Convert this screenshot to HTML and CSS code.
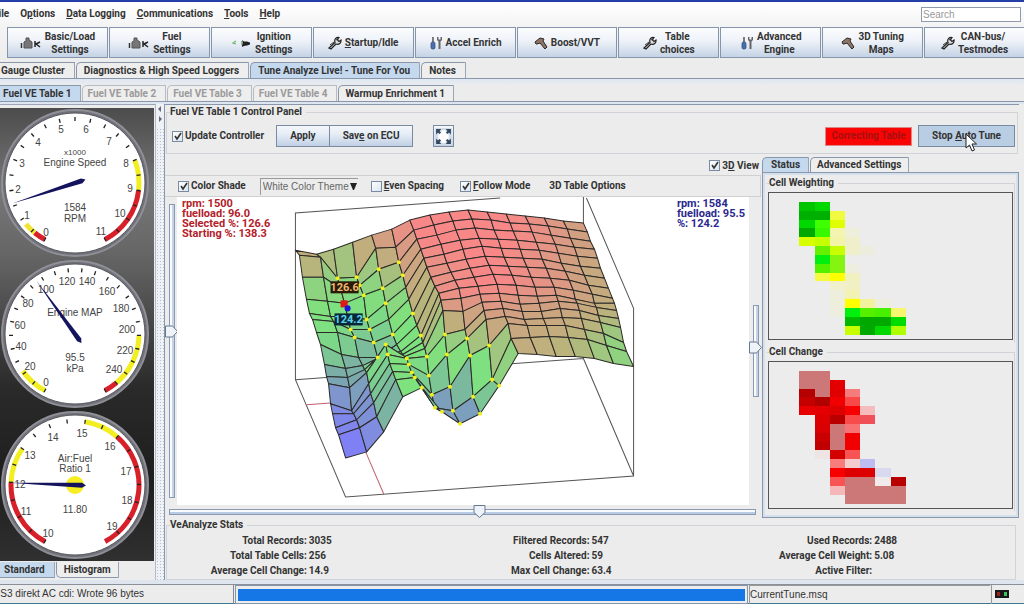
FILE: index.html
```html
<!DOCTYPE html>
<html lang="en">
<head>
<meta charset="utf-8">
<title>Tuning Console</title>
<link rel="stylesheet" href="styles.css">
</head>
<body>
<svg class="sprites" aria-hidden="true">
  <symbol id="i-injector" viewBox="0 0 22 14">
    <path d="M1.500 7v5" stroke="#333" stroke-width="1.500" fill="none"/>
    <path d="M4 12V6l2-1V2h3v2l3 2v6z" fill="#777" stroke="#555" stroke-width="1"/>
    <path d="M15 5v6M20 6l-4 2 4 3" stroke="#222" stroke-width="1.500" fill="none"/>
  </symbol>
  <symbol id="i-plug" viewBox="0 0 22 14">
    <path d="M6 5L3 7l3 1" stroke="#6b6" stroke-width="1.2" fill="none"/>
    <path d="M12 4l2 1.500h3l3 1v2l-3 1-3 .5-2 1V9l1-2z" fill="#222"/>
    <path d="M12 5v4" stroke="#4a7a4a"/>
  </symbol>
  <symbol id="i-wrench" viewBox="0 0 14 14">
    <path d="M1 12L7 6.500C6 3.500 8 1 11 1.500L9.500 4l1.500 1.500L13 4c.5 3-2 5-5 4L3 13z" fill="#ddd" stroke="#222" stroke-width="1.200"/>
    <path d="M2 9l4-3M8 4l3-2" stroke="#333"/>
  </symbol>
  <symbol id="i-tools" viewBox="0 0 12 14">
    <path d="M3 1v5" stroke="#555" stroke-width="1.500"/>
    <rect x="1" y="6" width="4" height="7" rx="1.500" fill="#4a6fae" stroke="#2c4674" stroke-width=".7"/>
    <path d="M7 1v3l1.500 1.500V13h2V5.500L12 4V1l-1.500 0v2.500h-2V1z" fill="#666"/>
  </symbol>
  <symbol id="i-hammer" viewBox="0 0 14 14">
    <path d="M1 6l5-4 4 1-1 2 4 6-2 2-5-6-3 1-1 0z" fill="#8d7668" stroke="#2b2623" stroke-width="1"/>
  </symbol>
</svg>

<header>
  <nav class="menubar" aria-label="Main menu">
    <a href="#file"><u>F</u>ile</a>
    <a href="#options">O<u>p</u>tions</a>
    <a href="#logging"><u>D</u>ata Logging</a>
    <a href="#comm"><u>C</u>ommunications</a>
    <a href="#tools"><u>T</u>ools</a>
    <a href="#help"><u>H</u>elp</a>
    <input class="search" type="text" placeholder="Search" aria-label="Search">
  </nav>
  <div class="toolbar">
    <button><svg class="wide"><use href="#i-injector"/></svg><span>Basic/Load<br>Settings</span></button>
    <button><svg class="wide"><use href="#i-injector"/></svg><span>Fuel<br>Settings</span></button>
    <button><svg class="wide"><use href="#i-plug"/></svg><span>Ignition<br>Settings</span></button>
    <button><svg><use href="#i-wrench"/></svg><span><u>S</u>tartup/Idle</span></button>
    <button><svg><use href="#i-tools"/></svg><span>Accel Enrich</span></button>
    <button><svg><use href="#i-hammer"/></svg><span>Boost/VVT</span></button>
    <button><svg><use href="#i-wrench"/></svg><span>Table<br>choices</span></button>
    <button><svg><use href="#i-tools"/></svg><span>Advanced<br>Engine</span></button>
    <button><svg><use href="#i-hammer"/></svg><span>3D Tuning<br>Maps</span></button>
    <button><svg><use href="#i-wrench"/></svg><span>CAN-bus/<br>Testmodes</span></button>
  </div>
</header>

<div class="tabs main-tabs" role="tablist">
  <button class="tab first" role="tab">Gauge Cluster</button>
  <button class="tab" role="tab">Diagnostics &amp; High Speed Loggers</button>
  <button class="tab on" role="tab" aria-selected="true">Tune Analyze Live! - Tune For You</button>
  <button class="tab" role="tab">Notes</button>
</div>
<div class="tabs table-tabs" role="tablist">
  <button class="tab on first" role="tab" aria-selected="true">Fuel VE Table 1</button>
  <button class="tab" role="tab" disabled>Fuel VE Table 2</button>
  <button class="tab" role="tab" disabled>Fuel VE Table 3</button>
  <button class="tab" role="tab" disabled>Fuel VE Table 4</button>
  <button class="tab" role="tab">Warmup Enrichment 1</button>
</div>

<main>
  <aside class="side">
    <div class="gauges" id="gauges"></div>
    <div class="tabs bottom-tabs" role="tablist">
      <button class="tab on first" role="tab" aria-selected="true">Standard</button>
      <button class="tab" role="tab">Histogram</button>
    </div>
  </aside>
  <div class="divider">
    <svg viewBox="0 0 8 24" aria-hidden="true"><path d="M5 2v6L2 5zM3 12v6l3-3z" fill="#667"/></svg>
  </div>

  <section class="work">
    <fieldset class="control">
      <legend>Fuel VE Table 1 Control Panel</legend>
      <div class="control-row">
        <label class="check"><input type="checkbox" checked>Update Controller</label>
        <div class="pair"><button class="btn">Apply</button><button class="btn">Sav<u>e</u> on ECU</button></div>
        <button class="btn expand" aria-label="Full screen">
          <svg viewBox="0 0 18 18"><rect x="1" y="1" width="16" height="16" fill="#d3dce8"/><path d="M4 7h10v4H4zM7 3h4v12H7zM5 5h8v8H5z" fill="#fff"/><path d="M2 2h5L2 7zM16 2h-5l5 5zM2 16h5l-5-5zM16 16h-5l5-5z" fill="#33475f"/><path d="M4 4l2 2M14 4l-2 2M4 14l2-2M14 14l-2-2" stroke="#33475f" stroke-width="2"/></svg>
        </button>
        <span class="flag">Correcting Table</span>
        <button class="btn stop">Stop <u>A</u>uto Tune
          <svg class="pointer" viewBox="0 0 12 19"><path d="M1 1v14l3.500-3 2.500 6 2.500-1-2.500-6h4.500z" fill="#fff" stroke="#222"/></svg>
        </button>
      </div>
    </fieldset>

    <div class="columns">
      <div class="view">
        <div class="view-top"><label class="check"><input type="checkbox" checked><span>3<u>D</u> View</span></label></div>
        <div class="view-bar">
          <label class="check"><input type="checkbox" checked>Color Shade</label>
          <select aria-label="Colour theme"><option>White Color Theme</option></select>
          <label class="check"><input type="checkbox"><span><u>E</u>ven Spacing</span></label>
          <label class="check"><input type="checkbox" checked><span><u>F</u>ollow Mode</span></label>
          <a class="options" href="#table-options">3D Table Options</a>
        </div>
        <div class="plot-grid">
          <input class="vslider left" type="range" min="0" max="100" value="43" aria-label="Pitch">
          <div class="plot">
            <svg id="surface" viewBox="178 196 570 307" role="img" aria-label="3D fuel table"></svg>
            <p class="readout selected">rpm: 1500<br>fuelload: 96.0<br>Selected %: 126.6<br>Starting %: 138.3</p>
            <p class="readout live">rpm: 1584<br>fuelload: 95.5<br>%: 124.2</p>
          </div>
          <input class="vslider right" type="range" min="0" max="100" value="46" aria-label="Zoom">
          <input class="hslider" type="range" min="0" max="100" value="53" aria-label="Rotation">
        </div>
      </div>

      <div class="status">
        <div class="tabs status-tabs" role="tablist">
          <button class="tab on" role="tab" aria-selected="true">Status</button>
          <button class="tab" role="tab">Advanced Settings</button>
        </div>
        <div class="status-body">
          <fieldset><legend>Cell Weighting</legend><svg class="heat" id="weight" viewBox="0 0 16 16.500" preserveAspectRatio="none" role="img" aria-label="Cell weighting"></svg></fieldset>
          <fieldset><legend>Cell Change</legend><svg class="heat" id="change" viewBox="0 0 16 16.500" preserveAspectRatio="none" role="img" aria-label="Cell change"></svg></fieldset>
        </div>
      </div>
    </div>

    <fieldset class="stats">
      <legend>VeAnalyze Stats</legend>
      <dl>
        <div><dt>Total Records:</dt><dd>3035</dd></div>
        <div><dt>Filtered Records:</dt><dd>547</dd></div>
        <div><dt>Used Records:</dt><dd>2488</dd></div>
        <div><dt>Total Table Cells:</dt><dd>256</dd></div>
        <div><dt>Cells Altered:</dt><dd>59</dd></div>
        <div><dt>Average Cell Weight:</dt><dd>5.08</dd></div>
        <div><dt>Average Cell Change:</dt><dd>14.9</dd></div>
        <div><dt>Max Cell Change:</dt><dd>63.4</dd></div>
        <div><dt>Active Filter:</dt><dd></dd></div>
      </dl>
    </fieldset>
  </section>
</main>

<footer>
  <span class="message"><span>MS3 direkt AC cdi: Wrote 96 bytes</span></span>
  <span class="progress"><span></span></span>
  <span class="file">CurrentTune.msq</span>
  <span class="leds"><svg viewBox="0 0 14 8"><rect width="14" height="8" fill="#181818"/><rect x="2" y="2" width="3" height="4" fill="#a02020"/><rect x="9" y="2" width="3" height="4" fill="#40c060"/></svg></span>
</footer>
<script src="app.js"></script>
</body>
</html>
```
FILE: styles.css
```css
* { box-sizing: border-box; }
body {
  margin: 0;
  min-height: 100vh;
  display: flex;
  flex-direction: column;
  overflow-x: hidden;
  background: #ececec;
  color: #333;
  font: bold 10px/12px Roboto, "Liberation Sans", sans-serif;
}
button, input, select { font: inherit; color: inherit; margin: 0; }
a { color: inherit; text-decoration: none; }
.sprites { position: absolute; width: 0; height: 0; }

header { border-top: 2px solid #2440a8; background: linear-gradient(#fff, #f4f4f4 24px, #ececec 60px); }
.menubar { display: flex; align-items: center; gap: 11px; height: 24px; margin-left: -7px; padding-right: 3px; }
.search {
  width: 100px; height: 15px; margin-left: auto; padding: 0 1px;
  border: 1px solid #8e9aab; background: #fff;
  font: 10px/12px "Liberation Sans", sans-serif;
}
.search::placeholder { color: #999; opacity: 1; }
.toolbar { display: grid; grid-template-columns: repeat(10, 1fr); gap: 1px; margin-right: -1px; padding: 1px 0 4px 7px; }
.toolbar button {
  display: flex; align-items: center; justify-content: center; gap: 3px;
  height: 31px; padding: 0;
  border: 1px solid #8595ab;
  background: linear-gradient(#fbfcfe, #eef2f8 45%, #c4d3e6);
  line-height: 13px; text-align: center;
}
.toolbar svg { width: 14px; height: 14px; }
.toolbar svg.wide { width: 22px; }

.tabs { display: flex; align-items: flex-end; gap: 1px; }
.tab {
  height: 16px; padding: 0 6px;
  border: 1px solid #8a97aa; border-bottom: 0; border-right-color: #9aa5b5;
  border-top-left-radius: 5px;
  background: #eeeeee;
  white-space: nowrap;
}
.tab.on { background: #c4d8ee; }
.tab.first { border-left: 0; border-top-left-radius: 0; padding-left: 1px; }
.tab:disabled { color: #9a9a9a; border-color: #b5bcc6; }
.main-tabs { border-bottom: 1px solid #8a97aa; }
.main-tabs .first { padding-right: 9px; }
.main-tabs .tab + .tab { padding: 0 9px 0 7px; }
.table-tabs { padding-top: 6px; border-bottom: 1px solid #8a97aa; background: linear-gradient(#dfe8f3, #ececec 7px); }
.table-tabs .first { padding: 0 8px 0 3px; }
.table-tabs .tab:disabled { padding: 0 9px 0 5px; }
.table-tabs .tab:last-child { padding: 0 8px 0 6px; }

main {
  flex: 1; display: grid; grid-template-columns: 156px 8px 1fr;
  padding-right: 5px; border-top: 2px solid #dde5f0; border-bottom: 4px solid #dfe5ee;
}
.side { display: flex; flex-direction: column; padding-top: 3px; border-top: 1px solid #9aa5b8; border-right: 1px solid #b0bac8; }
.gauges {
  flex: 1; display: flex; flex-direction: column; justify-content: space-between;
  margin-right: 1px;
  background: linear-gradient(#4c4c4c, #777 18%, #666 32%, #2a2a2a 62%, #1e1e1e 82%, #303030);
}
.gauges svg { display: block; width: 100%; }
.gauges text { font: 10px "Liberation Sans", sans-serif; fill: #444; text-anchor: middle; }
.gauges .small { font-size: 8px; }
.bottom-tabs { align-items: flex-start; padding: 1px 0 2px; }
.bottom-tabs .tab { border-top: 0; border-bottom: 1px solid #8a97aa; border-radius: 0 0 0 5px; padding: 0 7px; }
.bottom-tabs .first { border-radius: 0; padding: 0 9px 0 4px; }
.divider { background: radial-gradient(circle, #b8c0cc 0 25%, transparent 30%) 0 0 / 3px 3px, #eef1f5; }
.divider svg { display: block; width: 8px; height: 24px; background: #eef1f5; }

.work { display: flex; flex-direction: column; min-width: 0; border: 1px solid #8a97aa; border-right: 0; border-bottom: 0; }
fieldset { min-width: 0; margin: 0; padding: 0; border: 1px solid #d0d3d8; }
legend { padding: 0 4px 0 0; margin-left: 3px; }
.control { margin: 1px 1px 0; padding: 7px 2px 6px 5px; }
.control legend { margin-left: -2px; }
.control-row { display: flex; align-items: center; }
.check { display: flex; align-items: center; gap: 2px; white-space: nowrap; }
.check input {
  appearance: none; width: 11px; height: 11px;
  border: 1px solid #7a8aa0; background: linear-gradient(135deg, #fff, #dbe5f1);
}
.check input:checked {
  background: url("data:image/svg+xml,%3Csvg xmlns='http://www.w3.org/2000/svg' viewBox='0 0 9 9'%3E%3Cpath d='M2 4l2 3 4-6' fill='none' stroke='%23333' stroke-width='1.600'/%3E%3C/svg%3E"), linear-gradient(135deg, #fff, #dbe5f1);
}
.pair { display: flex; margin-left: 12px; }
.btn {
  height: 22px; padding: 0 13px;
  border: 1px solid #7a8aa0;
  background: linear-gradient(#f4f7fb, #e6edf6 40%, #c0d0e4);
  white-space: nowrap;
}
.pair .btn + .btn { margin-left: -1px; }
.expand { width: 21px; padding: 0; margin-left: 20px; }
.expand svg { display: block; width: 19px; height: 19px; }
.flag {
  display: grid; place-items: center; width: 87px; height: 19px; margin-left: auto;
  border: 1px solid #d88; background: #fb0404; color: #a81010;
}
.stop { position: relative; width: 97px; padding: 0; margin-left: 6px; background: #b9cde3; }
.pointer { position: absolute; left: 46px; top: 7px; width: 12px; height: 19px; }

.columns { flex: 1; display: grid; grid-template-columns: 1fr 257px; }
.view { display: flex; flex-direction: column; min-width: 0; }
.view-top { display: flex; align-items: center; justify-content: flex-end; height: 21px; padding: 2px 3px 0 0; }
.view-bar {
  display: flex; align-items: center; height: 22px; padding-left: 13px; margin-right: 1px;
  border: 1px solid #d0d0d0; border-left: 0;
}
.view-bar select {
  appearance: none; width: 98px; height: 17px; margin: 0 13px 0 14px; padding: 0 0 0 2px;
  border: 0; border-top: 1px solid #999; border-left: 1px solid #999;
  background: url("data:image/svg+xml,%3Csvg xmlns='http://www.w3.org/2000/svg' viewBox='0 0 7 7'%3E%3Cpath d='M0 0h7L4 7H3z' fill='%23222'/%3E%3C/svg%3E") right 1px center / 7px 7px no-repeat;
  font: 10px/12px "Liberation Sans", sans-serif; color: #666;
}
.view-bar .check + .check { margin-left: 16px; }
.options { margin-left: 19px; }
.plot-grid { flex: 1; display: grid; grid-template-columns: 12px 1fr 13px; grid-template-rows: 1fr 13px; align-items: center; }
.plot { position: relative; align-self: stretch; background: #fff; }
.plot svg { display: block; width: 100%; height: 100%; }
.plot text { font: bold 11px Roboto, sans-serif; text-anchor: middle; }
.readout { position: absolute; top: 2px; margin: 0; font-size: 11px; line-height: 10px; }
.selected { left: 5px; color: #b3202a; }
.live { right: 4px; color: #2a2890; }

input[type="range"] { appearance: none; background: none; }
.hslider { grid-column: 1 / -1; width: auto; height: 13px; margin: 0 6px 0 4px; }
.vslider { writing-mode: vertical-lr; width: 13px; height: 294px; }
.vslider.right { height: 92px; }
input[type="range"]::-webkit-slider-runnable-track { border: 1px solid #8a9ab2; background: #eef2f8; }
.hslider::-webkit-slider-runnable-track { height: 6px; background: linear-gradient(#f8fafc 50%, #b9cbe2 50%) !important; }
.vslider::-webkit-slider-runnable-track { width: 6px; background: linear-gradient(90deg, #f8fafc 50%, #c4d3e6 50%) !important; }
input[type="range"]::-webkit-slider-thumb { appearance: none; width: 13px; height: 13px; border: 0; }
.hslider::-webkit-slider-thumb {
  margin-top: -5px;
  background: url("data:image/svg+xml,%3Csvg xmlns='http://www.w3.org/2000/svg' viewBox='0 0 13 13'%3E%3Cpath d='M1 .5h11v7l-5.500 5-5.500-5z' fill='%23eef3fa' stroke='%23667890'/%3E%3C/svg%3E");
}
.vslider::-webkit-slider-thumb {
  margin-left: -5px;
  background: url("data:image/svg+xml,%3Csvg xmlns='http://www.w3.org/2000/svg' viewBox='0 0 13 13'%3E%3Cpath d='M.5 1v11h7l5-5.500-5-5.500z' fill='%23eef3fa' stroke='%23667890'/%3E%3C/svg%3E");
}

.status { display: flex; flex-direction: column; padding-top: 3px; }
.status-tabs .tab { height: 15px; padding: 0 7px 0 6px; }
.status-tabs .on { padding: 0 8px; }
.status-body {
  flex: 1; display: flex; flex-direction: column; gap: 3px;
  padding: 4px 3px 5px; border: 1px solid #8a97aa;
  background: #ececec; box-shadow: inset 0 0 0 2px #d5e0ee;
}
.status-body fieldset { flex: 1; display: flex; padding: 3px 1px 2px; border-left-color: transparent; border-bottom-color: transparent; }
.status-body legend { margin-left: 1px; }
.heat { display: block; width: 100%; height: 148px; border: 1px solid #555; }

.stats { margin: 1px 3px 0 1px; padding: 2px 0 1px; }
dl { display: grid; grid-template-columns: repeat(3, 1fr); row-gap: 0; margin: 0; }
dl div { display: grid; grid-template-columns: 1fr 1fr; gap: 3px; line-height: 15px; }
dt { text-align: right; }
dd { margin: 0 0 0 -1px; }

footer {
  display: grid; grid-template-columns: 234px 513px 1fr 33px;
  height: 20px; border-top: 1px solid #8a8f98; border-bottom: 1px solid #3a7a8c; gap: 1px;
  font: 10px/18px "Liberation Sans", sans-serif;
}
.message { overflow: hidden; border-right: 1px solid #888; }
.message span { margin-left: -8px; white-space: nowrap; }
.progress { padding: 3px 2px 2px; border: 1px solid #8595ab; }
.progress span { display: block; height: 100%; background: #1577e6; }
.file { border: 1px solid #999; border-width: 1px 0 0 1px; }
.leds { padding: 5px 0 0 3px; border-left: 1px solid #999; }
.leds svg { display: block; width: 14px; height: 8px; }
```
FILE: app.js
```js
const NS = 'http://www.w3.org/2000/svg';

function add(parent, name, attrs, text) {
  const el = document.createElementNS(NS, name);
  for (const key in attrs) el.setAttribute(key, attrs[key]);
  if (text !== undefined) el.textContent = text;
  parent.appendChild(el);
  return el;
}

/* Gauges: angles run clockwise from straight up, in degrees. */
const START = -152, SWEEP = 304;

const gauges = [
  { min: 0, span: 11, tick: 0.5, needle: -108,
    zones: [[0, 0.4, '#d8202a'], [0.4, 0.8, '#f0e430'], [8, 9, '#f2ee20'], [9, 11, '#d8202a']],
    labels: [[0, -29, 49], [1, -48, 32], [2, -57, 6], [3, -53, -20], [4, -37, -41], [5, -14, -54], [6, 11, -54], [7, 34, -42], [8, 51, -20], [9, 55, 5], [10, 45, 30], [11, 26, 48]],
    lines: [['x1000', -32, 'small'], ['Engine Speed', -21], ['1584', 24], ['RPM', 35]] },
  { min: 0, span: 250, tick: 10, needle: -36,
    zones: [[0, 22, '#f2ee20'], [200, 240, '#f2ee20'], [240, 250, '#d8202a']],
    labels: [[0, -29, 48], [20, -45, 32], [40, -54, 12], [60, -55, -9], [80, -47, -31], [100, -29, -45], [120, -8, -53], [140, 12, -53], [160, 32, -43], [180, 46, -26], [200, 52, -5], [220, 50, 16], [240, 39, 35]],
    lines: [['Engine MAP', -22], ['95.5', 23], ['kPa', 34]] },
  { min: 10, span: 9.44, tick: 0.5, needle: -88, dot: true,
    zones: [[10, 12, '#d8202a'], [12, 13, '#f2ee20'], [15, 16, '#f2ee20'], [16, 19.44, '#d8202a']],
    labels: [[10, -27, 48], [11, -49, 26], [12, -55, -1], [13, -45, -30], [14, -22, -48], [15, 7, -52], [16, 35, -39], [17, 51, -14], [18, 52, 15], [19, 37, 41]],
    lines: [['Air:Fuel', -27], ['Ratio 1', -17], ['11.80', 24]] }
];

const polar = (deg, r) => {
  const a = deg * Math.PI / 180;
  return [Math.sin(a) * r, -Math.cos(a) * r];
};

gauges.forEach(g => {
  const svg = add(document.getElementById('gauges'), 'svg', { viewBox: '-75 -75 154 151' });
  add(svg, 'circle', { r: 73, fill: '#707078', stroke: '#8f8f98', 'stroke-width': 2 });
  add(svg, 'circle', { r: 70, fill: '#fff', stroke: '#55555c' });
  const angle = v => START + SWEEP * (v - g.min) / g.span;
  g.zones.forEach(([a, b, color]) => {
    const p = polar(angle(a), 64), q = polar(angle(b), 64);
    add(svg, 'path', { d: `M${p}A64 64 0 0 1 ${q}`, fill: 'none', stroke: color, 'stroke-width': 5 });
  });
  for (let v = g.min; v <= g.min + g.span + 0.001; v += g.tick) {
    const p = polar(angle(v), 62), q = polar(angle(v), 66);
    add(svg, 'path', { d: `M${p}L${q}`, stroke: '#222', 'stroke-width': 1.3 });
  }
  g.labels.forEach(([t, x, y]) => add(svg, 'text', { x, y: y + 4 }, t));
  g.lines.forEach(([t, y, cls]) => add(svg, 'text', { x: 0, y: y + 4, class: cls || '' }, t));
  if (g.dot) add(svg, 'circle', { r: 9, fill: '#f6ee20' });
  add(svg, 'path', { d: 'M0-66L2.500 7L0 11L-2.500 7Z', fill: '#14145e', transform: `rotate(${g.needle})` });
});

/* Surface mesh: screen heights for 16 columns of 16 points, back to front. */
const backX = [296, 317, 334, 353, 372, 392, 410, 430, 449, 468, 487, 506, 525, 544, 563, 583];
const shift = [0, 4, 7, 11, 14, 17, 21, 25, 29, 31, 33, 35, 37, 40, 43, 50];
const meshY = [
  [249, 254, 276, 298, 312, 318, 331, 343, 363, 375, 382, 402, 412, 426, 433, 456],
  [253, 256, 276, 300, 315, 320, 331, 353, 367, 376, 386, 409, 412, 418, 426, 450],
  [248, 277, 287, 302, 315, 328, 336, 356, 364, 368, 371, 382, 392, 401, 415, 430],
  [241, 276, 284, 294, 318, 328, 341, 356, 355, 350, 343, 353, 362, 370, 378, 395],
  [234, 247, 268, 287, 302, 318, 333, 343, 350, 353, 355, 357, 363, 371, 376, 386],
  [228, 246, 261, 274, 286, 298, 312, 324, 334, 341, 347, 355, 374, 393, 406, 410],
  [219, 229, 238, 248, 257, 266, 276, 285, 292, 299, 309, 333, 353, 385, 409, 422],
  [214, 224, 234, 243, 253, 262, 271, 279, 287, 297, 310, 328, 337, 354, 395, 412],
  [211, 220, 229, 239, 248, 258, 267, 276, 285, 293, 301, 309, 318, 344, 378, 384],
  [209, 218, 227, 237, 245, 255, 264, 273, 283, 292, 300, 307, 315, 322, 337, 352],
  [211, 219, 229, 238, 247, 256, 265, 274, 284, 294, 303, 310, 318, 324, 336, 353],
  [213, 222, 230, 239, 248, 257, 266, 276, 286, 295, 302, 310, 317, 324, 335, 355],
  [215, 223, 231, 241, 249, 258, 267, 277, 286, 294, 300, 307, 316, 324, 336, 355],
  [217, 225, 234, 243, 252, 262, 270, 279, 289, 298, 302, 309, 317, 328, 338, 357],
  [220, 228, 237, 246, 255, 265, 274, 284, 293, 302, 306, 314, 321, 332, 344, 362],
  [222, 231, 240, 248, 257, 267, 277, 287, 297, 302, 309, 317, 326, 341, 350, 365]
];
const ramp = [[45, 128, 128, 245], [62, 126, 150, 205], [76, 122, 170, 170], [86, 124, 205, 145], [98, 126, 226, 126], [114, 146, 208, 128], [126, 188, 178, 124], [138, 212, 158, 130], [150, 248, 136, 136]];

function shade(h) {
  if (h <= ramp[0][0]) return `rgb(${ramp[0].slice(1)})`;
  for (let i = 1; i < ramp.length; i++) {
    const a = ramp[i - 1], b = ramp[i];
    if (h <= b[0]) {
      const t = (h - a[0]) / (b[0] - a[0]);
      return `rgb(${[1, 2, 3].map(k => Math.round(a[k] + (b[k] - a[k]) * t))})`;
    }
  }
  return `rgb(${ramp[ramp.length - 1].slice(1)})`;
}

const surface = document.getElementById('surface');
const point = (c, r) => [backX[c] + shift[r], meshY[c][r]];
const height = (c, r) => 378 - 21 * c / 15 + 117 * shift[r] / 50 - meshY[c][r];

add(surface, 'path', {
  d: 'M500 197L296 212V378L346 495L633 474V307L586 197M583 196V357L633 474M296 378L583 357',
  fill: 'none', stroke: '#555'
});
add(surface, 'path', { d: 'M307 403L334 401M366 450L384 492', stroke: '#c06070', fill: 'none' });
for (let r = 0; r < 15; r++) {
  for (let c = 0; c < 15; c++) {
    const h = (height(c, r) + height(c + 1, r) + height(c, r + 1) + height(c + 1, r + 1)) / 4;
    add(surface, 'polygon', {
      points: [point(c, r), point(c + 1, r), point(c + 1, r + 1), point(c, r + 1)].join(' '),
      fill: shade(h), stroke: '#2c2a28', 'stroke-width': 1, 'stroke-linejoin': 'round'
    });
  }
}
const visited = { 2: [1, 5, 6], 3: [1, 2, 3, 4, 5, 6, 7, 10, 11], 4: [2, 3, 4, 6, 11, 12, 13, 14, 15], 5: [2, 3, 6, 8, 11, 12, 13, 14, 15], 6: [11, 12, 13, 14, 15], 7: [12, 13, 14, 15], 8: [13, 14, 15] };
for (const c in visited) {
  visited[c].forEach(r => {
    const [cx, cy] = point(c, r);
    add(surface, 'circle', { cx, cy, r: 2, fill: '#f0f020' });
  });
}
add(surface, 'rect', { x: 341, y: 299, width: 7, height: 7, fill: '#e01818' });
add(surface, 'circle', { cx: 348, cy: 307, r: 3, fill: '#1818d8' });
add(surface, 'rect', { x: 331, y: 280, width: 28, height: 12, fill: '#2a1a08' });
add(surface, 'text', { x: 345, y: 290, fill: '#f0b870' }, '126.6');
add(surface, 'rect', { x: 335, y: 312, width: 28, height: 12, fill: '#062838' });
add(surface, 'text', { x: 349, y: 322, fill: '#60d0e8' }, '124.2');

/* Heat maps: [row, first column, colours...]. */
const weight = [
  [1, 2, '#00c400', '#00d800'],
  [2, 2, '#00b000', '#00b000', '#f0fa40'],
  [3, 2, '#00d800', '#40ff00', '#e0ff00'],
  [4, 2, '#00a800', '#38f800', '#f2f4b0', '#eeeedc'],
  [5, 2, '#d8ff00', '#c8ff00', '#f2f4a8', '#efefcc'],
  [6, 3, '#66f000', '#c8ff00', '#efefcc', '#ededde'],
  [7, 3, '#00ee10', '#84f410'],
  [8, 3, '#55f000', '#84f410', '#eeeee0'],
  [9, 3, '#f4fa40', '#ffff00', '#f0f0c0'],
  [10, 4, '#f0f0cc', '#f0f0c4'],
  [11, 4, '#eeeedc', '#f2f2b4'],
  [12, 4, '#eeeedc', '#ffff00', '#f2f29c', '#eeeedc'],
  [13, 4, '#eeeee0', '#00f010', '#55f000', '#48f000', '#f6f670'],
  [14, 5, '#00b800', '#00a800', '#00a800', '#00dc00'],
  [15, 5, '#c8ff00', '#00a800', '#00d800', '#b0ff00']
];
const change = [
  [1, 2, '#cc7878', '#cc7878'],
  [2, 2, '#cc7878', '#cc7878', '#e40000'],
  [3, 2, '#b40000', '#cc7878', '#e00000', '#f47c7c'],
  [4, 2, '#c40000', '#b00000', '#f00000', '#f84848'],
  [5, 2, '#e80000', '#e40000', '#dc0000', '#f80000', '#f4bcbc'],
  [6, 3, '#dc0000', '#b80000', '#f84c4c', '#f05058'],
  [7, 3, '#d80000', '#cc7878', '#f87474'],
  [8, 3, '#c80000', '#cc7878', '#f00000'],
  [9, 3, '#c00000', '#cc7878', '#f00000'],
  [10, 3, '#efe4e4', '#d40000', '#f85454'],
  [11, 4, '#f87c7c', '#f4cccc', '#bcbcf0'],
  [12, 4, '#f80000', '#dc0000', '#dc0000', '#d8d8ee'],
  [13, 4, '#f85454', '#cc7878', '#cc7878', '#f0eaea', '#b80000'],
  [14, 4, '#f4b8b8', '#cc7878', '#cc7878', '#cc7878', '#cc7878'],
  [15, 5, '#cc7878', '#cc7878', '#cc7878', '#cc7878']
];
function heat(id, rows) {
  const svg = document.getElementById(id);
  svg.setAttribute('shape-rendering', 'crispEdges');
  rows.forEach(([r, c, ...colors]) => colors.forEach((fill, i) =>
    add(svg, 'rect', { x: c + i, y: r, width: 1, height: 1, fill })));
}
heat('weight', weight);
heat('change', change);
```
